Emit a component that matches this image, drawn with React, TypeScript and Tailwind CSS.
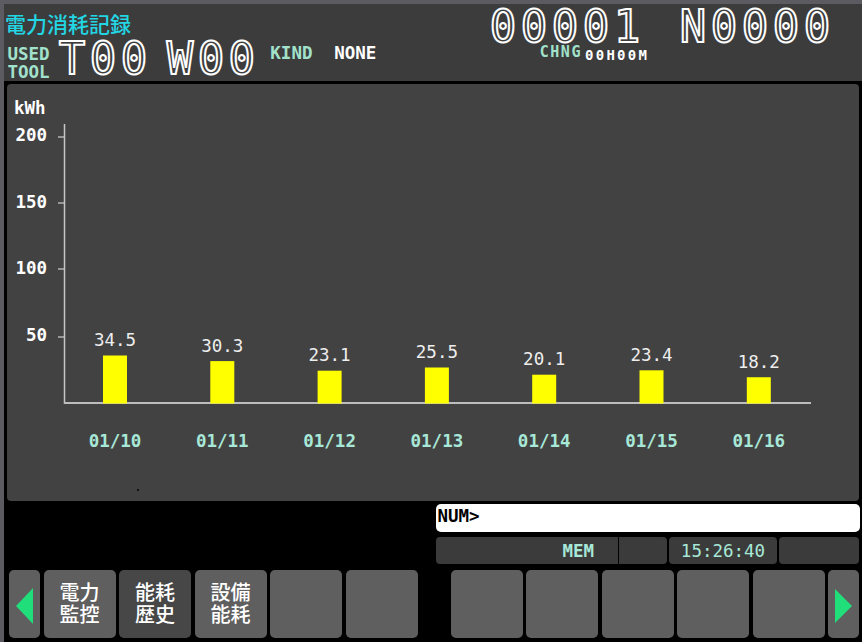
import React from "react";

type Day = { date: string; value: number };

const days: Day[] = [
  { date: "01/10", value: 34.5 },
  { date: "01/11", value: 30.3 },
  { date: "01/12", value: 23.1 },
  { date: "01/13", value: 25.5 },
  { date: "01/14", value: 20.1 },
  { date: "01/15", value: 23.4 },
  { date: "01/16", value: 18.2 },
];

const yTicks = [
  { label: "200", y: 137, base: 140.5 },
  { label: "150", y: 203, base: 207.5 },
  { label: "100", y: 269, base: 273.5 },
  { label: "50", y: 337, base: 340.5 },
];

const MONO = "DejaVu Sans Mono, Liberation Mono, monospace";

function Chart() {
  const first = 115;
  const pitch = 107.3;
  const barW = 24;
  return (
    <svg width={852} height={417} viewBox="7 84 852 417" className="block">
      <text x={14} y={113.5} fill="#ffffff" fontSize={17.5} fontWeight="bold" fontFamily={MONO}>
        kWh
      </text>
      {yTicks.map((t) => (
        <g key={t.label}>
          <text
            x={47}
            y={t.base}
            fill="#ffffff"
            fontSize={17.5}
            fontWeight="bold"
            textAnchor="end"
            fontFamily={MONO}
          >
            {t.label}
          </text>
          <line x1={58} y1={t.y} x2={64} y2={t.y} stroke="#b4b4b4" strokeWidth={1.5} />
        </g>
      ))}
      <line x1={64.5} y1={124} x2={64.5} y2={404} stroke="#c6c6c6" strokeWidth={1.5} />
      <line x1={64} y1={403} x2={811} y2={403} stroke="#bdbdbd" strokeWidth={2} />
      {days.map((d, i) => {
        const cx = first + i * pitch;
        const top = 401.5 - d.value * 1.3333;
        return (
          <g key={d.date}>
            <rect x={cx - barW / 2} y={top} width={barW} height={403.5 - top} fill="#ffff00" />
            <text
              x={cx}
              y={top - 9.5}
              fill="#eeeeee"
              fontSize={17.5}
              textAnchor="middle"
              fontFamily={MONO}
            >
              {d.value.toFixed(1)}
            </text>
            <text
              x={cx}
              y={446.5}
              fill="#a8e8d8"
              fontSize={17.5}
              fontWeight="bold"
              textAnchor="middle"
              fontFamily={MONO}
            >
              {d.date}
            </text>
          </g>
        );
      })}
      <rect x={137} y={489} width={2} height={2} fill="#141414" />
    </svg>
  );
}

function Header() {
  return (
    <div className="h-[77px] shrink-0 bg-[#3c3c3c] flex">
      <div className="w-[485.8px] pl-[1px] pt-[9px] flex flex-col">
        <div className="font-['Noto_Sans_CJK_JP',sans-serif] text-[21px] leading-[21px] font-medium text-[#22d6e4]">
          電力消耗記録
        </div>
        <div className="mt-[1px] flex items-start">
          <div className="ml-[2.5px] mt-[10px] flex flex-col text-[17.5px] leading-[18px] font-bold text-[#a2e2cc]">
            <span>USED</span>
            <span>TOOL</span>
          </div>
          <span className="ml-[9px] mt-[2px] text-[44px] leading-[44px] tracking-[4.5px] text-transparent [-webkit-text-stroke-width:2px] [-webkit-text-stroke-color:#ffffff]">
            T00
          </span>
          <span className="ml-[15px] mt-[2px] text-[44px] leading-[44px] tracking-[4.5px] text-transparent [-webkit-text-stroke-width:2px] [-webkit-text-stroke-color:#ffffff]">
            W00
          </span>
          <span className="ml-[10.7px] mt-[9px] text-[17.5px] leading-[18px] font-bold text-[#a2e2cc]">
            KIND
          </span>
          <span className="ml-[21.7px] mt-[9px] text-[17.5px] leading-[18px] font-bold text-white">
            NONE
          </span>
        </div>
      </div>
      <div className="flex-1 flex flex-col pt-[4.8px]">
        <div className="flex text-[44px] leading-[36px] tracking-[4.5px] text-transparent [-webkit-text-stroke-width:2px] [-webkit-text-stroke-color:#ffffff]">
          <span>00001</span>
          <span className="ml-[35px]">N0000</span>
        </div>
        <div className="flex items-start pl-[50px]">
          <span className="text-[15px] leading-[15px] font-bold tracking-[1.5px] text-[#a2e2cc]">
            CHNG
          </span>
          <span className="ml-[3px] mt-[3px] text-[14px] leading-[14px] font-bold tracking-[2.3px] text-white">
            00H00M
          </span>
        </div>
      </div>
    </div>
  );
}

function SoftKey({ lines, active }: { lines?: string[]; active?: boolean }) {
  return (
    <div
      className={`w-[72px] h-full rounded-[5px] flex flex-col items-center justify-center pb-[3px] font-['Noto_Sans_CJK_JP',sans-serif] text-[20px] leading-[22px] font-medium text-white ${
        active ? "bg-[#474747]" : "bg-[#5f5f5f]"
      }`}
    >
      {lines?.map((l) => (
        <span key={l}>{l}</span>
      ))}
    </div>
  );
}

function ArrowKey({ dir }: { dir: "left" | "right" }) {
  return (
    <div className="w-[31px] h-full rounded-[5px] bg-[#5f5f5f]">
      <svg width={31} height={68} viewBox="0 0 31 68" className="block">
        {dir === "left" ? (
          <polygon points="7,36 24,18 24,54" fill="#20de7a" />
        ) : (
          <polygon points="7,19 24,36 7,53" fill="#20de7a" />
        )}
      </svg>
    </div>
  );
}

export default function App() {
  return (
    <div className="w-[862px] h-[642px] bg-black border-t-4 border-l-4 border-[#5b5b61] overflow-hidden flex flex-col font-['DejaVu_Sans_Mono','Liberation_Mono',monospace]">
      <Header />

      <div className="mt-[3px] mx-[3px] h-[417px] shrink-0 rounded-[4px] bg-[#424242] overflow-hidden">
        <Chart />
      </div>

      <div className="mt-[3px] ml-[432px] mr-[2px] h-[28px] shrink-0 rounded-[5px] bg-white pt-[2.7px] pl-[1.5px] text-[17.5px] leading-[18px] font-bold text-black">
        NUM&gt;
      </div>

      <div className="mt-[5px] ml-[432px] h-[27px] shrink-0 flex text-[17.5px] leading-[18px] text-[#a8e8d8]">
        <div className="w-[182px] rounded-l-[4px] bg-[#3b3b3b] flex items-center justify-end pr-[24px] font-bold">
          MEM
        </div>
        <div className="ml-[1px] w-[48px] rounded-r-[4px] bg-[#3b3b3b]" />
        <div className="ml-[2px] w-[108px] rounded-[4px] bg-[#3b3b3b] flex items-center justify-center">
          15:26:40
        </div>
        <div className="ml-[2px] w-[80px] rounded-[4px] bg-[#3b3b3b]" />
      </div>

      <div className="mt-[6px] h-[68px] shrink-0 flex pl-[5px] pr-[3px]">
        <div className="flex gap-[3.5px]">
          <ArrowKey dir="left" />
          <SoftKey lines={["電力", "監控"]} />
          <SoftKey lines={["能耗", "歴史"]} active />
          <SoftKey lines={["設備", "能耗"]} />
          <SoftKey />
          <SoftKey />
        </div>
        <div className="ml-auto flex gap-[3.5px]">
          <SoftKey />
          <SoftKey />
          <SoftKey />
          <SoftKey />
          <SoftKey />
          <ArrowKey dir="right" />
        </div>
      </div>
    </div>
  );
}
